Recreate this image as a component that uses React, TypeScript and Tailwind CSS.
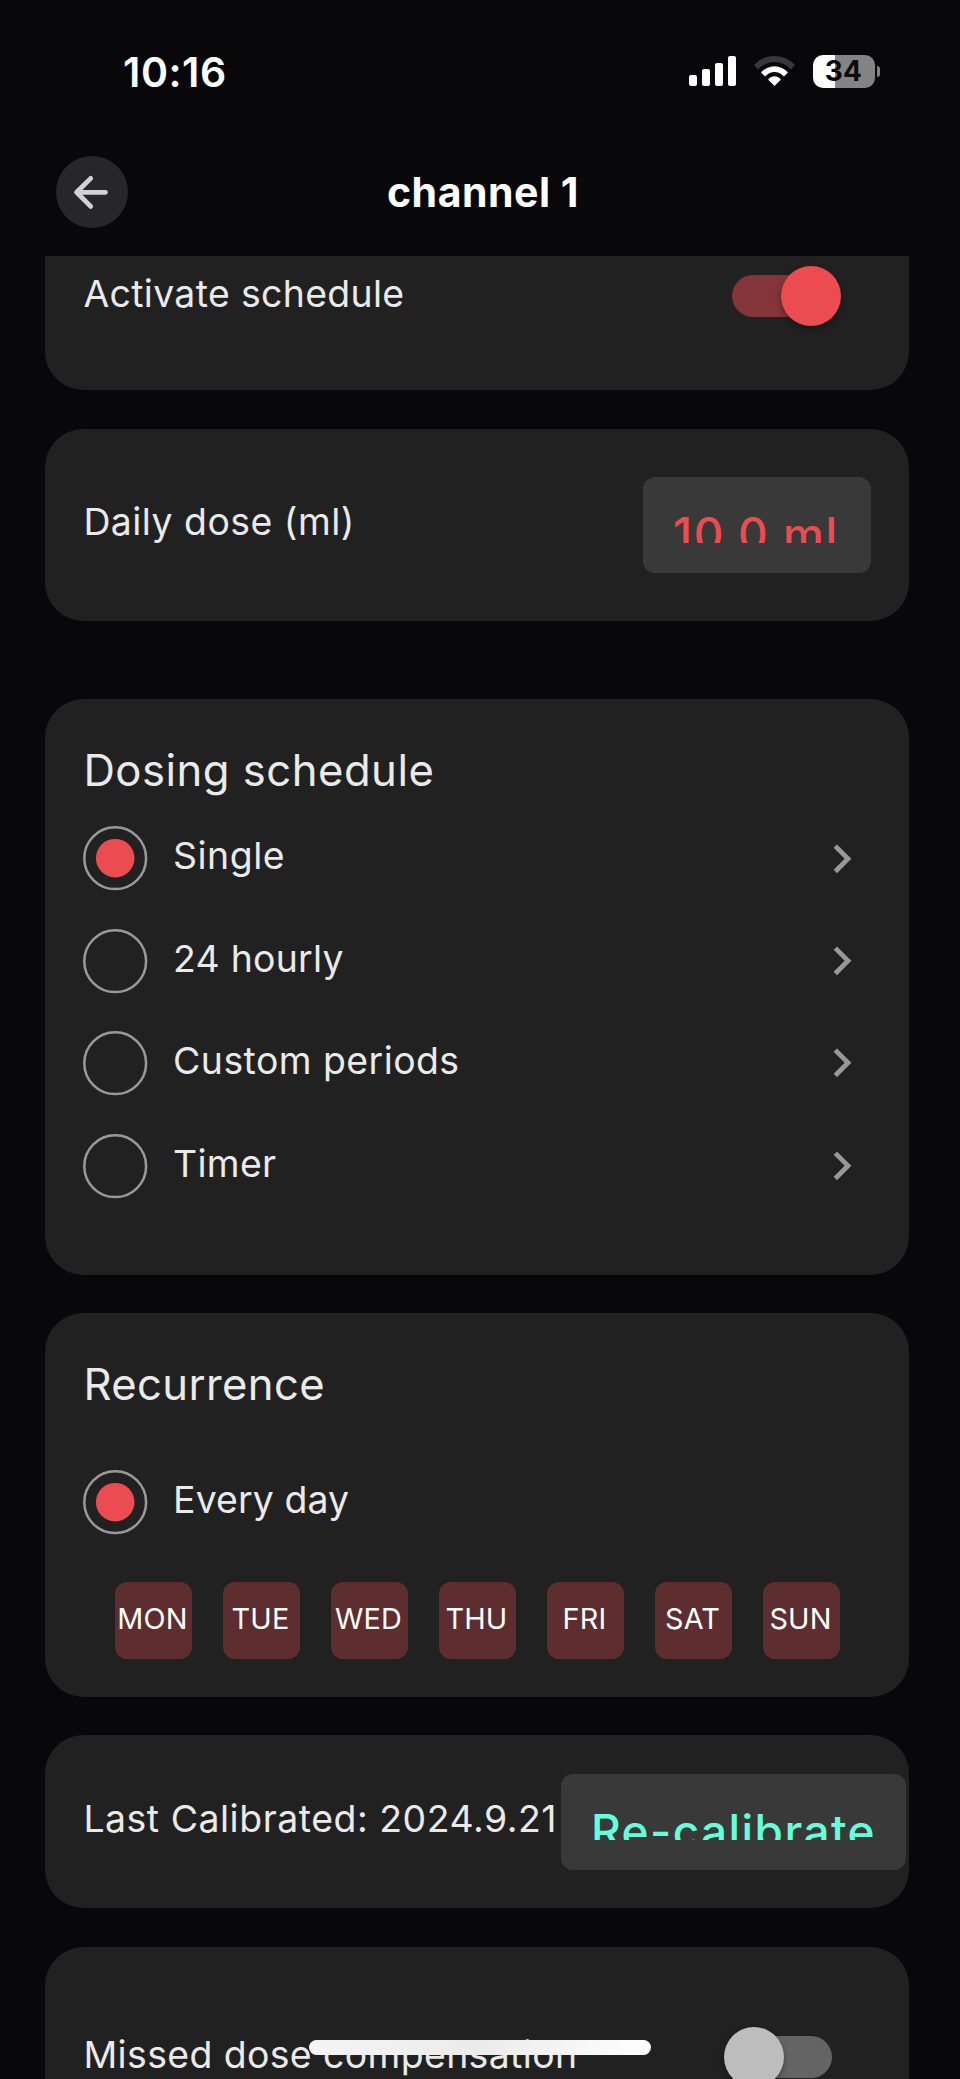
import type { ReactNode } from 'react';

function StatusBar() {
  return (
    <div className="flex h-[144px] items-start pl-[123px] pr-20">
      <span className="mt-[41.5px] text-[41px] leading-[60px] font-semibold tracking-[0.55px] text-white">10:16</span>
      <div className="mt-[55px] ml-auto flex items-start">
        <svg width="47" height="31" viewBox="0 0 47 31" className="mt-px fill-white">
          <rect x="0" y="19" width="8" height="11" rx="2" />
          <rect x="13" y="13" width="8" height="17" rx="2" />
          <rect x="26" y="7" width="8" height="23" rx="2" />
          <rect x="39" y="0" width="8" height="30" rx="2" />
        </svg>
        <svg width="45" height="34" viewBox="0 0 45 34" className="-mt-px ml-4 fill-white">
          <path d="M2 11A27.9 27.9 0 0 1 43 11L39 15.5A22 22 0 0 0 6 15.5Z" className="fill-[#38383a]" />
          <path d="M9 18.5A17.7 17.7 0 0 1 36 18.5L31.9 22.5A12 12 0 0 0 13.1 22.5Z" />
          <path d="M16.2 25.7A7.6 7.6 0 0 1 28.8 25.7L22.5 32Z" />
        </svg>
        <div className="ml-4 flex items-center">
          <div className="flex h-[33px] w-[62px] items-center justify-center rounded-[10px] bg-linear-to-r from-white from-[22px] to-[#848484] to-[22px] pr-px">
            <span className="text-[28px] leading-[33px] font-bold tracking-[0.3px] text-[#0a0a0c]">34</span>
          </div>
          <div className="ml-[2px] h-[11px] w-[3px] rounded-r-full bg-[#848484]" />
        </div>
      </div>
    </div>
  );
}

function Header() {
  return (
    <div className="flex h-[112px] items-start pt-3 pl-14">
      <button className="flex size-[72px] items-center justify-center rounded-full bg-[#272729]">
        <svg width="72" height="72" viewBox="0 0 72 72" fill="none" className="stroke-[#d2d2d2]" strokeWidth="4.8" strokeLinecap="round" strokeLinejoin="round">
          <path d="M49.5 36.3H21M34.7 22.4L20.6 36.3L34.7 50.4" />
        </svg>
      </button>
      <h1 className="ml-[259px] text-[41px] leading-[73px] font-bold tracking-[0.5px] text-white">channel 1</h1>
    </div>
  );
}

function Switch({ on }: { on: boolean }) {
  return (
    <div className={`flex h-[42px] w-[102px] items-center rounded-full ${on ? 'justify-end bg-[#843539]' : 'justify-start bg-[#646464]'}`}>
      <div className={`size-[60px] shrink-0 rounded-full shadow-[0_3px_6px_rgba(0,0,0,0.35)] ${on ? '-mr-[7px] bg-[#eb4c51]' : '-ml-[6.5px] bg-[#bdbdbd]'}`} />
    </div>
  );
}

function Radio({ checked }: { checked: boolean }) {
  return (
    <svg width="64" height="64" viewBox="0 0 64 64" className="shrink-0 overflow-visible">
      <circle cx="32.2" cy="32.2" r="30.9" fill="none" strokeWidth="2.5" className="stroke-[#999999]" />
      {checked && <circle cx="32.2" cy="32.2" r="19.3" className="fill-[#eb4c51]" />}
    </svg>
  );
}

function Option({ label, checked, tracking, arrow }: { label: string; checked: boolean; tracking: string; arrow?: boolean }) {
  return (
    <div className="flex h-[102.4px] items-center">
      <Radio checked={checked} />
      <span className={`ml-[25.7px] pb-[4px] text-[37.4px] leading-[50px] ${tracking}`}>{label}</span>
      {arrow && (
        <svg width="57.6" height="57.6" viewBox="0 0 24 24" className="ml-auto fill-[#989898]">
          <path d="M10 6L8.59 7.41 13.17 12l-4.58 4.59L10 18l6-6z" />
        </svg>
      )}
    </div>
  );
}

function ClippedButton({ children, className }: { children: ReactNode; className: string }) {
  return (
    <button className={`flex h-24 shrink-0 items-start rounded-xl bg-[#393939] pt-[30px] pl-[30.5px] text-left ${className}`}>
      <span className="block h-9 overflow-hidden text-[46px] leading-[54px] font-medium whitespace-nowrap">{children}</span>
    </button>
  );
}

const modes = [
  { label: 'Single', tracking: 'tracking-[0.5px]' },
  { label: '24 hourly', tracking: 'tracking-[0.25px]' },
  { label: 'Custom periods', tracking: 'tracking-[0.45px]' },
  { label: 'Timer', tracking: 'tracking-[0.3px]' },
];
const days = ['MON', 'TUE', 'WED', 'THU', 'FRI', 'SAT', 'SUN'];

export default function App() {
  return (
    <div className="relative flex h-[2079px] w-[960px] flex-col overflow-hidden bg-[#08080a] font-['Inter',sans-serif] text-[#eaeaea]">
      <StatusBar />
      <Header />
      <main className="flex min-h-0 flex-1 flex-col overflow-hidden pr-[51px] pl-[45px]">
        <section className="h-[134.4px] shrink-0 rounded-b-[38.4px] bg-[#212121] pr-[75px] pl-[38.4px]">
          <div className="flex h-20 items-center justify-between">
            <span className="pb-[4px] text-[37.4px] leading-[50px] tracking-[0.34px]">Activate schedule</span>
            <Switch on />
          </div>
        </section>

        <section className="mt-[38.3px] flex h-[192px] shrink-0 items-center justify-between rounded-[38.4px] bg-[#212121] pr-[38px] pl-[38.4px]">
          <span className="pb-[5px] text-[37.4px] leading-[50px] tracking-[0.48px]">Daily dose (ml)</span>
          <ClippedButton className="w-[228.5px] tracking-[1.57px] text-[#eb4c51]">10.0 ml</ClippedButton>
        </section>

        <section className="mt-[78px] h-[576px] shrink-0 rounded-[38.4px] bg-[#212121] px-[38.4px] pt-[39.4px]">
          <h2 className="mb-[3.2px] text-[43.6px] leading-[66px] tracking-[0.5px]">Dosing schedule</h2>
          {modes.map((m, i) => (
            <Option key={m.label} label={m.label} tracking={m.tracking} checked={i === 0} arrow />
          ))}
        </section>

        <section className="mt-[38.4px] h-[384px] shrink-0 rounded-[38.4px] bg-[#212121] px-[38.4px] pt-[39.4px]">
          <h2 className="mb-[32.3px] text-[43.6px] leading-[66px] tracking-[0.38px]">Recurrence</h2>
          <Option label="Every day" checked tracking="tracking-[0.1px]" />
          <div className="mt-[28.8px] flex justify-center gap-[31px]">
            {days.map((d) => (
              <div key={d} className="flex h-[77px] w-[77px] items-center justify-center rounded-xl bg-[#5e2d30] pr-px pb-[3px] text-[28.8px] leading-[40px] tracking-[0.2px] text-white">
                {d}
              </div>
            ))}
          </div>
        </section>

        <section className="mt-[38.4px] flex h-[172.8px] shrink-0 items-center justify-between rounded-[38.4px] bg-[#212121] pr-[3.5px] pl-[38.4px]">
          <span className="pb-[5px] text-[37.4px] leading-[50px] tracking-[0.53px] whitespace-nowrap">Last Calibrated: 2024.9.21</span>
          <ClippedButton className="w-[345px] tracking-[1.4px] text-[#64ffda]">Re-calibrate</ClippedButton>
        </section>

        <section className="mt-[38.4px] flex h-[220.6px] shrink-0 items-center justify-between rounded-[38.4px] bg-[#212121] pr-[77px] pl-[38.4px]">
          <span className="pb-[4px] text-[37.4px] leading-[50px] tracking-[0.39px]">Missed dose compensation</span>
          <Switch on={false} />
        </section>
      </main>
      <div className="absolute top-[2040px] left-[309px] h-[15px] w-[342px] rounded-full bg-linear-to-r from-[#f5f5f5] via-[#ebebeb] to-white" />
    </div>
  );
}
